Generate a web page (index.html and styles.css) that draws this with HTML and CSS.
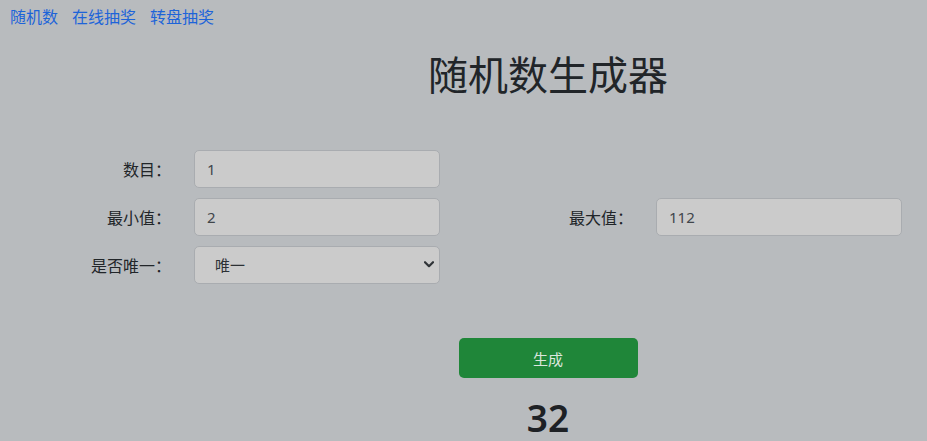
FILE: index.html
```html
<!DOCTYPE html>
<html lang="zh">
<head>
<meta charset="utf-8">
<title>随机数生成器</title>
<link rel="stylesheet" href="styles.css">
</head>
<body>
<nav class="nav">
  <a href="#" class="nav-link">随机数</a>
  <a href="#" class="nav-link">在线抽奖</a>
  <a href="#" class="nav-link">转盘抽奖</a>
</nav>
<div class="center">
  <h1 class="title">随机数生成器</h1>
</div>
<form class="form">
  <div class="row">
    <div class="field">
      <label class="label">数目：</label>
      <input class="control" type="text" value="1">
    </div>
  </div>
  <div class="row">
    <div class="field">
      <label class="label">最小值：</label>
      <input class="control" type="text" value="2">
    </div>
    <div class="field">
      <label class="label">最大值：</label>
      <input class="control" type="text" value="112">
    </div>
  </div>
  <div class="row">
    <div class="field">
      <label class="label">是否唯一：</label>
      <div class="select-wrap">
        <select class="control select">
          <option>唯一</option>
          <option>不唯一</option>
        </select>
        <svg class="chevron" width="10" height="7" viewBox="0 0 10 7"><path d="M1 1.2 L5 5.2 L9 1.2" fill="none" stroke="#2f3337" stroke-width="2.2" stroke-linecap="round" stroke-linejoin="round"/></svg>
      </div>
    </div>
  </div>
</form>
<div class="center">
  <button class="btn" type="button">生成</button>
  <div class="result">32</div>
</div>
</body>
</html>
```
FILE: styles.css
```css
html, body {
  margin: 0;
  padding: 0;
  background: #b8bbbe;
  font-family: "Noto Sans", "Noto Sans CJK SC", sans-serif;
  color: #212529;
  overflow: hidden;
}

.nav {
  display: flex;
  gap: 14px;
  padding: 5px 0 0 10px;
  height: 24px;
  line-height: 24px;
}

.nav-link {
  font-size: 16px;
  color: #1d64d9;
  text-decoration: none;
}

.center {
  margin-left: 169px;
  display: flex;
  flex-direction: column;
  align-items: center;
}

.title {
  margin: 22px 0 0;
  font-size: 40px;
  font-weight: 400;
  line-height: 48px;
  color: #212529;
}

.form {
  margin-top: 51px;
  display: flex;
  flex-direction: column;
  gap: 10px;
}

.row {
  display: flex;
}

.field {
  width: 462px;
  display: grid;
  grid-template-columns: 171px 246px;
  column-gap: 23px;
  align-items: center;
}

.label {
  text-align: right;
  font-size: 16px;
  color: #212529;
}

.control {
  box-sizing: border-box;
  width: 246px;
  height: 38px;
  margin: 0;
  padding: 0 12px;
  background: #cbcbcb;
  border: 1px solid #a9acb0;
  border-radius: 5px;
  font-family: "Noto Sans", "Noto Sans CJK SC", sans-serif;
  font-size: 15px;
  color: #41464b;
  outline: none;
}

.select-wrap {
  position: relative;
  width: 246px;
  height: 38px;
}

.select {
  appearance: none;
  -webkit-appearance: none;
  padding-left: 20px;
  color: #2c3034;
}

.chevron {
  position: absolute;
  right: 6px;
  top: 15px;
  pointer-events: none;
}

.btn {
  margin-top: 54px;
  width: 179px;
  height: 40px;
  border: none;
  border-radius: 5px;
  background: #1f8639;
  color: #dbe6de;
  font-family: "Noto Sans", "Noto Sans CJK SC", sans-serif;
  font-size: 15px;
  cursor: pointer;
}

.result {
  margin-top: 21px;
  font-family: "Noto Sans", sans-serif;
  font-size: 37px;
  font-weight: 600;
  line-height: 38px;
  color: #1e2125;
}
```
